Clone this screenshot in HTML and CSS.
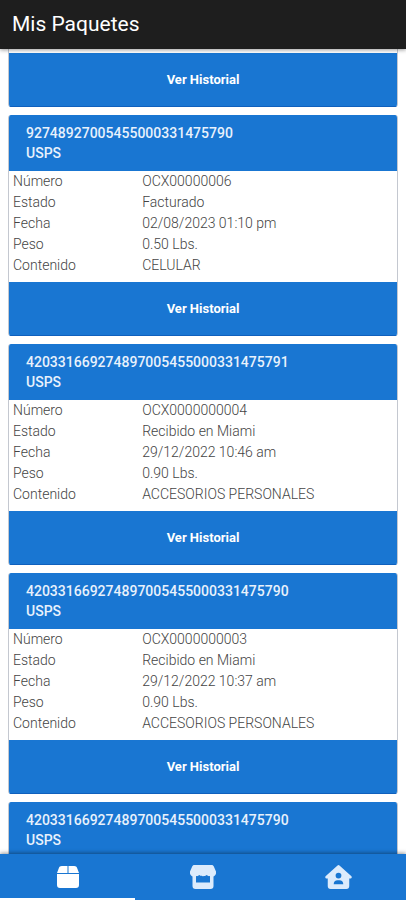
FILE: index.html
```
<!DOCTYPE html>
<html lang="es">
<head>
    <meta charset="UTF-8">
    <meta name="viewport" content="width=device-width, initial-scale=1.0">
    <title>Mis Paquetes</title>
    <link rel="stylesheet" href="styles.css">
</head>
<body>
    <header class="top-bar">
        <h1>Mis Paquetes</h1>
    </header>

    <!-- Lista de paquetes -->
    <main class="package-list">
        <article class="card card-scrolled">
            <button type="button" class="history-button">Ver Historial</button>
        </article>

        <article class="card">
            <h2 class="card-header">92748927005455000331475790<br>USPS</h2>
            <dl class="details">
                <dt>Número</dt><dd>OCX00000006</dd>
                <dt>Estado</dt><dd>Facturado</dd>
                <dt>Fecha</dt><dd>02/08/2023 01:10 pm</dd>
                <dt>Peso</dt><dd>0.50 Lbs.</dd>
                <dt>Contenido</dt><dd>CELULAR</dd>
            </dl>
            <button type="button" class="history-button">Ver Historial</button>
        </article>

        <article class="card">
            <h2 class="card-header">420331669274897005455000331475791<br>USPS</h2>
            <dl class="details">
                <dt>Número</dt><dd>OCX0000000004</dd>
                <dt>Estado</dt><dd>Recibido en Miami</dd>
                <dt>Fecha</dt><dd>29/12/2022 10:46 am</dd>
                <dt>Peso</dt><dd>0.90 Lbs.</dd>
                <dt>Contenido</dt><dd>ACCESORIOS PERSONALES</dd>
            </dl>
            <button type="button" class="history-button">Ver Historial</button>
        </article>

        <article class="card">
            <h2 class="card-header">420331669274897005455000331475790<br>USPS</h2>
            <dl class="details">
                <dt>Número</dt><dd>OCX0000000003</dd>
                <dt>Estado</dt><dd>Recibido en Miami</dd>
                <dt>Fecha</dt><dd>29/12/2022 10:37 am</dd>
                <dt>Peso</dt><dd>0.90 Lbs.</dd>
                <dt>Contenido</dt><dd>ACCESORIOS PERSONALES</dd>
            </dl>
            <button type="button" class="history-button">Ver Historial</button>
        </article>

        <article class="card">
            <h2 class="card-header">420331669274897005455000331475790<br>USPS</h2>
        </article>
    </main>

    <!-- Navegación inferior -->
    <nav class="tab-bar">
        <a href="#paquetes" class="tab active" aria-label="Paquetes">
            <svg viewBox="0 0 24 24" width="24" height="24">
                <path d="M11.500 1v7H1l1.700-4.600C3.300 1.800 4.200 1 5.800 1zM12.500 1h5.700c1.600 0 2.500.8 3.100 2.400L23 8H12.500zM1 9h22v11a3 3 0 0 1-3 3H4a3 3 0 0 1-3-3z"/>
            </svg>
        </a>
        <a href="#tienda" class="tab" aria-label="Tienda">
            <svg viewBox="0 0 26 24" width="26" height="24">
                <path fill-rule="evenodd" d="M4.500 0h17c1 0 1.700.5 2.200 1.300L26 6.500c.5 2.500-.8 4.500-2.500 5V21a3 3 0 0 1-3 3h-15a3 3 0 0 1-3-3v-9.500C.8 11-.5 9 0 6.500l2.300-5.200C2.800.5 3.500 0 4.500 0zM6 11v6.500h14V11c-1.300.4-2.400 0-3.300-1-1.900 1.600-5.500 1.600-7.400 0-.9 1-2 1.400-3.300 1z"/>
            </svg>
        </a>
        <a href="#cuenta" class="tab" aria-label="Mi cuenta">
            <svg viewBox="0 0 28 25" width="27" height="24">
                <path fill-rule="evenodd" d="M13 .4a1.600 1.600 0 0 1 2 0l12.200 11c1.300 1.300.4 2.600-1.200 2.600h-.8v8a3 3 0 0 1-3 3H5.800a3 3 0 0 1-3-3v-8H2c-1.600 0-2.500-1.300-1.200-2.600zM14 8a3 3 0 1 0 0 6 3 3 0 0 0 0-6zM9 20h10c0-2.700-1.600-4.200-4-4.200h-2c-2.400 0-4 1.500-4 4.200z"/>
            </svg>
        </a>
    </nav>
</body>
</html>
```

FILE: styles.css
```
* {
    box-sizing: border-box;
}
body {
    display: flex;
    flex-direction: column;
    height: 100vh;
    margin: 0;
    background: #fff;
    font-family: Roboto, "Liberation Sans", sans-serif;
    font-size: 14px;
}
.top-bar {
    position: relative;
    z-index: 1;
    padding: 12px;
    background: #1e1e1e;
    color: #fff;
    box-shadow: 0 1px 4px rgba(0, 0, 0, 0.4);
}
.top-bar h1 {
    margin: 0;
    font-size: 21px;
    font-weight: 400;
    line-height: 25px;
}
.package-list {
    display: flex;
    flex: 1;
    flex-direction: column;
    gap: 8px;
    min-height: 0;
    padding: 0 8px;
    overflow: hidden;
}
.card {
    flex-shrink: 0;
    border: 1px solid #c4c8d0;
    border-width: 0 1px;
    border-radius: 3px;
    overflow: hidden;
}
.card-scrolled {
    padding-top: 4px;
    border-radius: 0 0 3px 3px;
}
.card-header {
    margin: 0;
    padding: 8px 17px;
    background: #1976d2;
    color: #e8f1fc;
    font-size: 14px;
    font-weight: 500;
    line-height: 20px;
}
.details {
    display: grid;
    grid-template-columns: 34% 1fr;
    margin: 0;
    padding: 0 4px 6px;
    color: #444;
    font-weight: 300;
    line-height: 21px;
}
.details dd {
    margin: 0;
}
.history-button {
    display: block;
    width: 100%;
    height: 54px;
    padding: 0;
    border: 0;
    border-bottom: 1px solid #0f60bd;
    background: #1976d2;
    color: #fff;
    font-family: inherit;
    font-size: 13px;
    font-weight: 700;
    cursor: pointer;
}
.tab-bar {
    position: relative;
    z-index: 1;
    display: grid;
    grid-template-columns: repeat(3, 1fr);
    height: 46px;
    background: #1976d2;
    box-shadow: 0 -1px 4px rgba(0, 0, 0, 0.4);
}
.tab {
    display: flex;
    align-items: center;
    justify-content: center;
    padding-top: 1px;
    border-bottom: 2px solid transparent;
    color: #dcebfc;
}
.tab.active {
    border-bottom-color: #fff;
    color: #fff;
}
.tab svg {
    fill: currentColor;
}
```
